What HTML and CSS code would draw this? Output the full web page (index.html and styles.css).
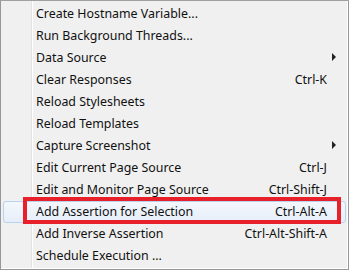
FILE: index.html
```html
<!DOCTYPE html>
<html lang="en">
<head>
    <meta charset="UTF-8">
    <title>Menu</title>
    <link rel="stylesheet" href="styles.css">
</head>
<body>
    <div class="menu">
        <div class="item"><span class="label">Create Hostname Variable...</span></div>
        <div class="item"><span class="label">Run Background Threads...</span></div>
        <div class="item"><span class="label">Data Source</span><span class="arrow"></span></div>
        <div class="item"><span class="label">Clear Responses</span><span class="key">Ctrl-K</span></div>
        <div class="item"><span class="label">Reload Stylesheets</span></div>
        <div class="item"><span class="label">Reload Templates</span></div>
        <div class="item"><span class="label">Capture Screenshot</span><span class="arrow"></span></div>
        <div class="item"><span class="label">Edit Current Page Source</span><span class="key">Ctrl-J</span></div>
        <div class="item"><span class="label">Edit and Monitor Page Source</span><span class="key">Ctrl-Shift-J</span></div>
        <div class="item selected"><span class="label">Add Assertion for Selection</span><span class="key">Ctrl-Alt-A</span></div>
        <div class="item"><span class="label">Add Inverse Assertion</span><span class="key">Ctrl-Alt-Shift-A</span></div>
        <div class="item"><span class="label">Schedule Execution ...</span></div>
        <div class="mark"></div>
    </div>
</body>
</html>
```

FILE: styles.css
```css
html, body {
    margin: 0;
    padding: 0;
}
body {
    font-family: "Noto Sans", "Open Sans", sans-serif;
    font-size: 12.4px;
    color: #111;
}
.menu {
    position: relative;
    box-sizing: border-box;
    width: 349px;
    height: 270px;
    padding: 2px;
    border: 1px solid #979797;
    border-top-color: #a0a0a0;
    background-color: #f0f0f0;
    background-image: linear-gradient(to right, transparent 30px, #e2e3e3 30px, #e2e3e3 31px, #fff 31px, #fff 32px, transparent 32px);
    box-shadow: inset -1px -1px 0 #fff;
}
.item {
    display: flex;
    align-items: center;
    box-sizing: border-box;
    height: 22px;
    padding-left: 32px;
    padding-bottom: 2px;
    border: 1px solid transparent;
    border-radius: 3px;
}
.label {
    flex: 1;
    white-space: nowrap;
}
.key {
    white-space: nowrap;
    margin-right: 18px;
}
.arrow {
    width: 0;
    height: 0;
    border-top: 4px solid transparent;
    border-bottom: 4px solid transparent;
    border-left: 4px solid #222;
    margin-right: 9px;
}
.selected {
    background: linear-gradient(#f4f8fd, #e6eef9);
    border-color: #b8d2ef;
}
.mark {
    position: absolute;
    left: 22px;
    top: 196px;
    width: 310px;
    height: 19px;
    border: 4px solid #e8202a;
}
```
